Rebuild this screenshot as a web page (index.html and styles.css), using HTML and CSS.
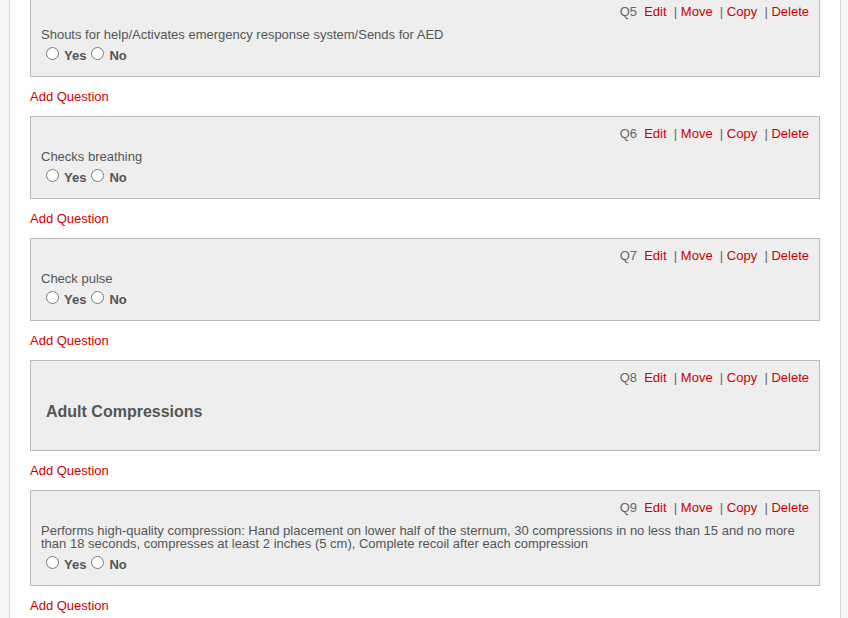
FILE: index.html
```html
<!DOCTYPE html>
<html>
<head>
<meta charset="utf-8">
<link rel="stylesheet" href="styles.css">
</head>
<body>
<div class="page">
  <div class="list">
    <div class="card">
      <div class="head"><span class="qn">Q5</span>&nbsp; <a href="#">Edit</a>&nbsp; |&nbsp;<a href="#">Move</a>&nbsp; |&nbsp;<a href="#">Copy</a>&nbsp; |&nbsp;<a href="#">Delete</a></div>
      <div class="qtext">Shouts for help/Activates emergency response system/Sends for AED</div>
      <div class="opts"><input type="radio" name="q5"><b>Yes</b><input type="radio" name="q5"><b>No</b></div>
    </div>
    <div class="add"><a href="#">Add Question</a></div>

    <div class="card">
      <div class="head"><span class="qn">Q6</span>&nbsp; <a href="#">Edit</a>&nbsp; |&nbsp;<a href="#">Move</a>&nbsp; |&nbsp;<a href="#">Copy</a>&nbsp; |&nbsp;<a href="#">Delete</a></div>
      <div class="qtext">Checks breathing</div>
      <div class="opts"><input type="radio" name="q6"><b>Yes</b><input type="radio" name="q6"><b>No</b></div>
    </div>
    <div class="add"><a href="#">Add Question</a></div>

    <div class="card">
      <div class="head"><span class="qn">Q7</span>&nbsp; <a href="#">Edit</a>&nbsp; |&nbsp;<a href="#">Move</a>&nbsp; |&nbsp;<a href="#">Copy</a>&nbsp; |&nbsp;<a href="#">Delete</a></div>
      <div class="qtext">Check pulse</div>
      <div class="opts"><input type="radio" name="q7"><b>Yes</b><input type="radio" name="q7"><b>No</b></div>
    </div>
    <div class="add"><a href="#">Add Question</a></div>

    <div class="card">
      <div class="head"><span class="qn">Q8</span>&nbsp; <a href="#">Edit</a>&nbsp; |&nbsp;<a href="#">Move</a>&nbsp; |&nbsp;<a href="#">Copy</a>&nbsp; |&nbsp;<a href="#">Delete</a></div>
      <div class="title">Adult Compressions</div>
    </div>
    <div class="add"><a href="#">Add Question</a></div>

    <div class="card">
      <div class="head"><span class="qn">Q9</span>&nbsp; <a href="#">Edit</a>&nbsp; |&nbsp;<a href="#">Move</a>&nbsp; |&nbsp;<a href="#">Copy</a>&nbsp; |&nbsp;<a href="#">Delete</a></div>
      <div class="qtext">Performs high-quality compression: Hand placement on lower half of the sternum, 30 compressions in no less than 15 and no more than 18 seconds, compresses at least 2 inches (5 cm), Complete recoil after each compression</div>
      <div class="opts"><input type="radio" name="q9"><b>Yes</b><input type="radio" name="q9"><b>No</b></div>
    </div>
    <div class="add"><a href="#">Add Question</a></div>
  </div>
</div>
</body>
</html>
```
FILE: styles.css
```css
html, body {
  margin: 0;
  padding: 0;
  background: #f5f5f5;
  font-family: "Liberation Sans", Arial, sans-serif;
  font-size: 13px;
  color: #555;
  overflow: hidden;
}
.page {
  margin: 0 7px 0 9px;
  background: #fff;
  border-left: 1px solid #d8d8d8;
  border-right: 1px solid #d8d8d8;
  padding: 0 20px;
  min-height: 700px;
}
.list {
  margin-top: -6px;
}
a {
  color: #c00;
  text-decoration: none;
}
.card {
  background: #eee;
  border: 1px solid #bbb;
  padding: 9px 10px 13px 10px;
}
.head {
  text-align: right;
  line-height: 16px;
  color: #666;
}
.qtext {
  margin-top: 8px;
  line-height: 13px;
  color: #555;
}
.opts {
  line-height: 15px;
  padding-top: 3px;
  color: #555;
}
.opts input {
  margin: 3px 5px 0 5px;
  width: 13px;
  height: 13px;
}
.title {
  margin: 16px 0 15px 5px;
  font-size: 16px;
  font-weight: bold;
  line-height: 20px;
  color: #555;
}
.add {
  padding: 12px 0;
  line-height: 15px;
}
```
